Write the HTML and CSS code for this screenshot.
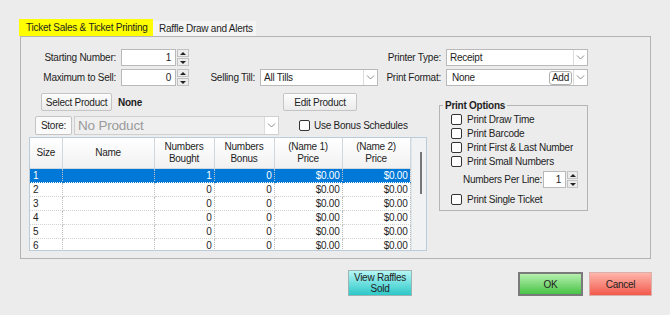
FILE: index.html
```html
<!DOCTYPE html>
<html lang="en">
<head>
    <meta charset="UTF-8">
    <title>Raffle Settings</title>
    <link rel="stylesheet" href="styles.css">
</head>
<body>

    <div class="window">
        <!-- Tabs -->
        <div class="tabs">
            <div class="tab tab-active">Ticket Sales &amp; Ticket Printing</div>
            <div class="tab">Raffle Draw and Alerts</div>
        </div>

        <div class="panel">
            <!-- Top form rows -->
            <div class="top-grid">
                <span class="lbl">Starting Number:</span>
                <div class="spin">
                    <span class="spin-val">1</span>
                    <span class="spin-btns"><span class="spin-up"></span><span class="spin-down"></span></span>
                </div>
                <span></span>
                <span></span>
                <span class="lbl">Printer Type:</span>
                <div class="combo">
                    <span class="combo-val">Receipt</span>
                    <span class="combo-arrow"><svg width="9" height="5" viewBox="0 0 9 5"><path d="M1 0.5 L4.5 4 L8 0.5" /></svg></span>
                </div>

                <span class="lbl">Maximum to Sell:</span>
                <div class="spin">
                    <span class="spin-val">0</span>
                    <span class="spin-btns"><span class="spin-up"></span><span class="spin-down"></span></span>
                </div>
                <span class="lbl">Selling Till:</span>
                <div class="combo">
                    <span class="combo-val">All Tills</span>
                    <span class="combo-arrow"><svg width="9" height="5" viewBox="0 0 9 5"><path d="M1 0.5 L4.5 4 L8 0.5" /></svg></span>
                </div>
                <span class="lbl">Print Format:</span>
                <div class="combo">
                    <span class="combo-val format-val">None</span>
                    <span class="add-btn">Add</span>
                    <span class="combo-arrow"><svg width="9" height="5" viewBox="0 0 9 5"><path d="M1 0.5 L4.5 4 L8 0.5" /></svg></span>
                </div>
            </div>

            <div class="main">
                <div class="left">
                    <div class="product-row">
                        <button class="btn select-btn">Select Product</button>
                        <span class="product-name">None</span>
                        <button class="btn edit-btn">Edit Product</button>
                    </div>

                    <div class="store-row">
                        <button class="btn store-btn">Store:</button>
                        <div class="combo combo-disabled">
                            <span class="combo-val">No Product</span>
                            <span class="combo-arrow"><svg width="9" height="5" viewBox="0 0 9 5"><path d="M1 0.5 L4.5 4 L8 0.5" /></svg></span>
                        </div>
                        <span class="check"></span>
                        <span class="check-label">Use Bonus Schedules</span>
                    </div>

                    <div class="table-wrap">
                        <table class="grid">
                            <thead>
                                <tr>
                                    <th class="c-size">Size</th>
                                    <th class="c-name">Name</th>
                                    <th class="c-num">Numbers<br>Bought</th>
                                    <th class="c-num">Numbers<br>Bonus</th>
                                    <th class="c-price">(Name 1)<br>Price</th>
                                    <th class="c-price">(Name 2)<br>Price</th>
                                </tr>
                            </thead>
                            <tbody id="gridBody">
                                <!-- rows filled by script below -->
                            </tbody>
                        </table>
                        <div class="scroll">
                            <div class="scroll-thumb"></div>
                        </div>
                    </div>
                </div>

                <!-- Print options group -->
                <div class="group">
                    <div class="group-title">Print Options</div>
                    <div class="opt"><span class="check"></span>Print Draw Time</div>
                    <div class="opt"><span class="check"></span>Print Barcode</div>
                    <div class="opt"><span class="check"></span>Print First &amp; Last Number</div>
                    <div class="opt"><span class="check"></span>Print Small Numbers</div>
                    <div class="per-line">
                        <span>Numbers Per Line:</span>
                        <div class="spin spin-small">
                            <span class="spin-val">1</span>
                            <span class="spin-btns"><span class="spin-up"></span><span class="spin-down"></span></span>
                        </div>
                    </div>
                    <div class="opt opt-last"><span class="check"></span>Print Single Ticket</div>
                </div>
            </div>
        </div>
    </div>

    <div class="footer">
        <button class="fbtn view-btn">View Raffles<br>Sold</button>
        <button class="fbtn ok-btn">OK</button>
        <button class="fbtn cancel-btn">Cancel</button>
    </div>

    <script>
        // Build the ticket size rows
        const body = document.getElementById("gridBody");
        const bought = [1, 0, 0, 0, 0, 0];
        for (let i = 0; i < 6; i++) {
            const row = document.createElement("tr");
            if (i === 0) row.className = "selected";
            row.innerHTML = `
                <td class="c-size">${i + 1}</td>
                <td class="c-name"></td>
                <td class="c-num">${bought[i]}</td>
                <td class="c-num">0</td>
                <td class="c-price">$0.00</td>
                <td class="c-price">$0.00</td>
            `;
            body.appendChild(row);
        }
    </script>

</body>
</html>
```

FILE: styles.css
```css
/* Basic reset */
* {
    margin: 0;
    padding: 0;
    box-sizing: border-box;
}

body {
    width: 670px;
    height: 315px;
    overflow: hidden;
    background-color: #ececec;
    font-family: "Liberation Sans", Arial, sans-serif;
    font-size: 10px;
    letter-spacing: -0.25px;
    white-space: nowrap;
    color: #1e1e1e;
}

button {
    font: inherit;
    color: inherit;
    letter-spacing: inherit;
}

/* Window + tabs */
.window {
    padding: 19px 0 0 19px;
}

.tabs {
    display: flex;
    align-items: flex-end;
    height: 17px;
}

.tab {
    height: 15px;
    line-height: 15px;
    padding: 0 6px;
    width: 103px;
    background-color: #f4f4f4;
}

.tab-active {
    width: 134px;
    height: 17px;
    line-height: 17px;
    padding-left: 7px;
    background-color: #ffff00;
}

.panel {
    margin-left: 1px;
    width: 631px;
    height: 223px;
    border: 1px solid #b4b4b4;
    padding-top: 12px;
}

/* Top grid of labels and fields */
.top-grid {
    display: grid;
    grid-template-columns: 100px 68px 71px 118px 68px 142px;
    grid-auto-rows: 17px;
    row-gap: 3px;
}

.lbl {
    text-align: right;
    padding-right: 5px;
    line-height: 17px;
}

/* Spin box */
.spin {
    display: flex;
    height: 17px;
}

.spin-val {
    flex: 1;
    background-color: #fff;
    border: 1px solid #b9b9b9;
    text-align: right;
    padding-right: 4px;
    line-height: 15px;
}

.spin-btns {
    width: 12px;
    display: flex;
    flex-direction: column;
    gap: 1px;
    margin-left: 1px;
}

.spin-up,
.spin-down {
    flex: 1;
    background-color: #ececec;
    border: 1px solid #c2c2c2;
    display: flex;
    align-items: center;
    justify-content: center;
}

.spin-up::after {
    content: "";
    border-left: 3px solid transparent;
    border-right: 3px solid transparent;
    border-bottom: 3px solid #222;
}

.spin-down::after {
    content: "";
    border-left: 3px solid transparent;
    border-right: 3px solid transparent;
    border-top: 3px solid #222;
}

/* Combo box */
.combo {
    display: flex;
    align-items: center;
    height: 17px;
    background-color: #fff;
    border: 1px solid #b9b9b9;
}

.combo-val {
    flex: 1;
    padding-left: 3px;
    line-height: 15px;
}

.format-val {
    padding-left: 5px;
}

.combo-arrow {
    width: 14px;
    height: 15px;
    border-left: 1px solid #dcdcdc;
    display: flex;
    align-items: center;
    justify-content: center;
}

.combo-arrow path {
    fill: none;
    stroke: #8a8a8a;
    stroke-width: 1;
}

.add-btn {
    height: 14px;
    line-height: 12px;
    padding: 0 2px;
    margin-right: 1px;
    border: 1px solid #b0b0b0;
    border-radius: 3px;
    background-color: #fff;
}

.combo-disabled {
    height: 19px;
    background-color: #efefef;
    border-color: #cfcfcf;
}

.combo-disabled .combo-val {
    font-size: 13.5px;
    letter-spacing: -0.2px;
    color: #9a9a9a;
    line-height: 17px;
}

.combo-disabled .combo-arrow {
    height: 17px;
    background-color: #fff;
}

/* Main area below the top rows */
.main {
    display: flex;
    margin-top: 7px;
}

.left {
    width: 407px;
}

.btn {
    height: 18px;
    border: 1px solid #c4c4c4;
    border-radius: 2px;
    background: linear-gradient(to bottom, #fdfdfd, #ebebeb);
    padding: 0;
    cursor: pointer;
}

.product-row {
    display: flex;
    align-items: center;
    width: 336px;
    padding-left: 20px;
}

.select-btn {
    width: 71px;
}

.product-name {
    margin-left: 6px;
    font-weight: bold;
}

.edit-btn {
    margin-left: auto;
    width: 74px;
}

.store-row {
    display: flex;
    align-items: center;
    margin-top: 5px;
    padding-left: 14px;
}

.store-btn {
    width: 37px;
    height: 19px;
    background: #fafafa;
}

.store-row .combo {
    width: 205px;
    margin-left: 2px;
}

.check {
    width: 11px;
    height: 11px;
    border: 1px solid #333;
    border-radius: 2px;
    background-color: #fff;
    flex-shrink: 0;
}

.store-row .check {
    margin-left: 20px;
}

.check-label {
    margin-left: 4px;
}

/* Product size grid */
.table-wrap {
    display: flex;
    margin: 2px 0 0 8px;
    width: 398px;
    height: 114px;
    border: 1px solid #b9ccdc;
    overflow: hidden;
}

.grid {
    width: 380px;
    border-collapse: collapse;
    table-layout: fixed;
    align-self: flex-start;
}

.grid th {
    height: 30px;
    font-weight: normal;
    line-height: 12px;
    background: linear-gradient(to bottom, #ffffff, #f1f1f1);
    border-right: 1px solid #cfd8df;
    border-bottom: 1px solid #cfd8df;
}

.grid td {
    height: 14px;
    line-height: 13px;
    background-color: #fff;
    border-right: 1px dotted #bdbdbd;
    border-bottom: 1px dotted #d2d2d2;
    text-align: right;
    padding-right: 2px;
}

.grid td.c-size {
    text-align: left;
    padding-left: 3px;
}

.grid tr.selected td {
    background-color: #0078d7;
    color: #fff;
    border-bottom-color: #0078d7;
}

.c-size { width: 32px; }
.c-name { width: 92px; }
.c-num { width: 60px; }
.c-price { width: 68px; }

.scroll {
    flex: 1;
    background-color: #f0f2f4;
    border-left: 1px solid #dfe6ec;
    padding: 14px 0 0 8px;
}

.scroll-thumb {
    width: 2px;
    height: 42px;
    background-color: #767676;
}

/* Print options group */
.group {
    margin: 12px 0 0 11px;
    width: 149px;
    height: 106px;
    border: 1px solid #b4b4b4;
    padding-left: 11px;
}

.group-title {
    width: max-content;
    margin: -7px 0 0 -8px;
    padding: 0 2px;
    height: 13px;
    line-height: 13px;
    font-weight: bold;
    background-color: #ececec;
}

.opt {
    display: flex;
    align-items: center;
    gap: 5px;
    height: 14px;
}

.per-line {
    display: flex;
    align-items: center;
    margin-top: 3px;
    padding-left: 12px;
    gap: 1px;
}

.spin-small {
    width: 35px;
}

.spin-small .spin-btns {
    width: 11px;
}

.opt-last {
    margin-top: 4px;
}

/* Footer buttons */
.footer {
    display: flex;
    align-items: flex-end;
    margin-top: 11px;
    padding: 0 18px 0 348px;
}

.fbtn {
    cursor: pointer;
    color: #222;
}

.view-btn {
    width: 64px;
    height: 26px;
    line-height: 11px;
    border: 1px solid #9fb4b4;
    background: linear-gradient(to bottom, #b4f6f6, #2cc8c8);
}

.ok-btn {
    margin-left: auto;
    width: 65px;
    height: 24px;
    border: 2px solid #7a7a7a;
    background: linear-gradient(to bottom, #b6f0ae, #48c446);
}

.cancel-btn {
    margin-left: 6px;
    width: 63px;
    height: 24px;
    border: 1px solid #d9b0aa;
    background: linear-gradient(to bottom, #ffb6ac, #f25a4c);
}
```
